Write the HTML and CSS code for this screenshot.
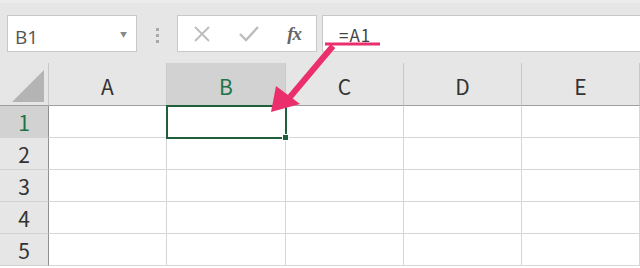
FILE: index.html
```html
<!DOCTYPE html>
<html lang="ja">

<head>
    <meta charset="UTF-8">
    <title>Excel formula</title>
    <link rel="stylesheet" href="styles.css">
</head>

<body>
    <div class="sheet">
        <div class="toolbar">
            <div class="name-box">
                <span class="name-text">B1</span>
                <span class="drop">&#9660;</span>
            </div>
            <div class="dots"><span></span><span></span><span></span></div>
            <div class="buttons">
                <svg class="btn" width="18" height="18" viewBox="0 0 18 18">
                    <path d="M2 2 L16 16 M16 2 L2 16" stroke="#bcbcbc" stroke-width="1.8" fill="none" />
                </svg>
                <svg class="btn" width="22" height="18" viewBox="0 0 22 18">
                    <path d="M2 9 L8 15 L20 2" stroke="#bcbcbc" stroke-width="2.4" fill="none" />
                </svg>
                <span class="fx">fx</span>
            </div>
            <div class="formula">
                <span class="formula-text">=A1</span>
            </div>
        </div>

        <div class="grid">
            <div class="corner"><div class="tri"></div></div>
            <div class="col-head">A</div>
            <div class="col-head active">B</div>
            <div class="col-head">C</div>
            <div class="col-head">D</div>
            <div class="col-head">E</div>

            <div class="row-head active">1</div>
            <div class="cell"></div>
            <div class="cell selected"></div>
            <div class="cell"></div>
            <div class="cell"></div>
            <div class="cell"></div>

            <div class="row-head">2</div>
            <div class="cell"></div>
            <div class="cell"></div>
            <div class="cell"></div>
            <div class="cell"></div>
            <div class="cell"></div>

            <div class="row-head">3</div>
            <div class="cell"></div>
            <div class="cell"></div>
            <div class="cell"></div>
            <div class="cell"></div>
            <div class="cell"></div>

            <div class="row-head">4</div>
            <div class="cell"></div>
            <div class="cell"></div>
            <div class="cell"></div>
            <div class="cell"></div>
            <div class="cell"></div>

            <div class="row-head">5</div>
            <div class="cell"></div>
            <div class="cell"></div>
            <div class="cell"></div>
            <div class="cell"></div>
            <div class="cell"></div>
        </div>

        <!-- annotation arrow over the sheet -->
        <svg class="arrow" width="640" height="268" viewBox="0 0 640 268">
            <line x1="325" y1="44" x2="380" y2="44" stroke="#ea2f6c" stroke-width="3" />
            <line x1="333" y1="46" x2="290" y2="97" stroke="#ea2f6c" stroke-width="6" />
            <polygon points="271,112 276,86 300,104" fill="#ea2f6c" />
        </svg>
    </div>
</body>

</html>
```

FILE: styles.css
```css
body {
    margin: 0;
    font-family: "Noto Sans CJK JP", "Open Sans", sans-serif;
}

.sheet {
    position: relative;
    width: 640px;
    height: 268px;
    overflow: hidden;
    background-color: #ffffff;
}

.toolbar {
    display: flex;
    align-items: flex-start;
    height: 63px;
    padding-top: 12px;
    box-sizing: border-box;
    background-color: #e6e6e6;
    border-top: 3px solid #ececec;
}

.name-box {
    display: flex;
    align-items: center;
    justify-content: space-between;
    width: 130px;
    height: 37px;
    margin-left: 7px;
    padding: 0 9px 0 7px;
    box-sizing: border-box;
    background-color: #fff;
    border: 1px solid #c8c8c8;
}

.name-text {
    font-family: "Open Sans", sans-serif;
    font-size: 19px;
    color: #555;
    padding-top: 6px;
}

.drop {
    font-size: 7px;
    color: #888;
}

.dots {
    display: flex;
    flex-direction: column;
    gap: 3px;
    width: 40px;
    align-items: center;
    padding-top: 13px;
}

.dots span {
    width: 3px;
    height: 3px;
    background-color: #a8a8a8;
}

.buttons {
    display: flex;
    align-items: center;
    justify-content: space-between;
    width: 140px;
    height: 37px;
    padding: 0 15px 0 15px;
    box-sizing: border-box;
    background-color: #fff;
    border: 1px solid #c8c8c8;
}

.fx {
    font-family: "Liberation Serif", serif;
    font-style: italic;
    font-weight: bold;
    font-size: 19px;
    color: #666;
    letter-spacing: -1px;
}

.formula {
    flex: 1;
    height: 37px;
    margin-left: 5px;
    padding-left: 16px;
    box-sizing: border-box;
    background-color: #fff;
    border: 1px solid #c8c8c8;
    border-right: none;
    display: flex;
    align-items: center;
}

.formula-text {
    font-size: 17px;
    color: #444;
    letter-spacing: 1px;
    padding-top: 2px;
}

.grid {
    display: grid;
    grid-template-columns: 49px 118px 119px 118px 118px 118px;
    grid-template-rows: 43px repeat(5, 32px);
}

.corner {
    position: relative;
    background-color: #e6e6e6;
    border-right: 1px solid #c8c8c8;
    border-bottom: 1px solid #9e9e9e;
}

.tri {
    position: absolute;
    right: 4px;
    bottom: 3px;
    width: 0;
    height: 0;
    border-left: 32px solid transparent;
    border-bottom: 32px solid #b4b4b4;
}

.col-head {
    display: flex;
    align-items: center;
    justify-content: center;
    background-color: #e6e6e6;
    border-right: 1px solid #c9c9c9;
    border-bottom: 1px solid #9e9e9e;
    font-size: 21px;
    color: #333;
    padding-top: 4px;
}

.col-head.active {
    background-color: #d2d2d2;
    color: #217346;
}

.row-head {
    display: flex;
    align-items: center;
    justify-content: center;
    background-color: #e6e6e6;
    border-right: 1px solid #8f8f8f;
    border-bottom: 1px solid #d2d2d2;
    font-size: 21px;
    color: #333;
}

.row-head.active {
    background-color: #d2d2d2;
    color: #217346;
}

.cell {
    border-right: 1px solid #d6d6d6;
    border-bottom: 1px solid #d6d6d6;
}

.cell.selected {
    position: relative;
    outline: 2px solid #1f5f3c;
    outline-offset: -1px;
}

.cell.selected::after {
    content: "";
    position: absolute;
    right: -4px;
    bottom: -4px;
    width: 5px;
    height: 5px;
    background-color: #1f5f3c;
    border: 1px solid #fff;
}

.arrow {
    position: absolute;
    left: 0;
    top: 0;
}
```
